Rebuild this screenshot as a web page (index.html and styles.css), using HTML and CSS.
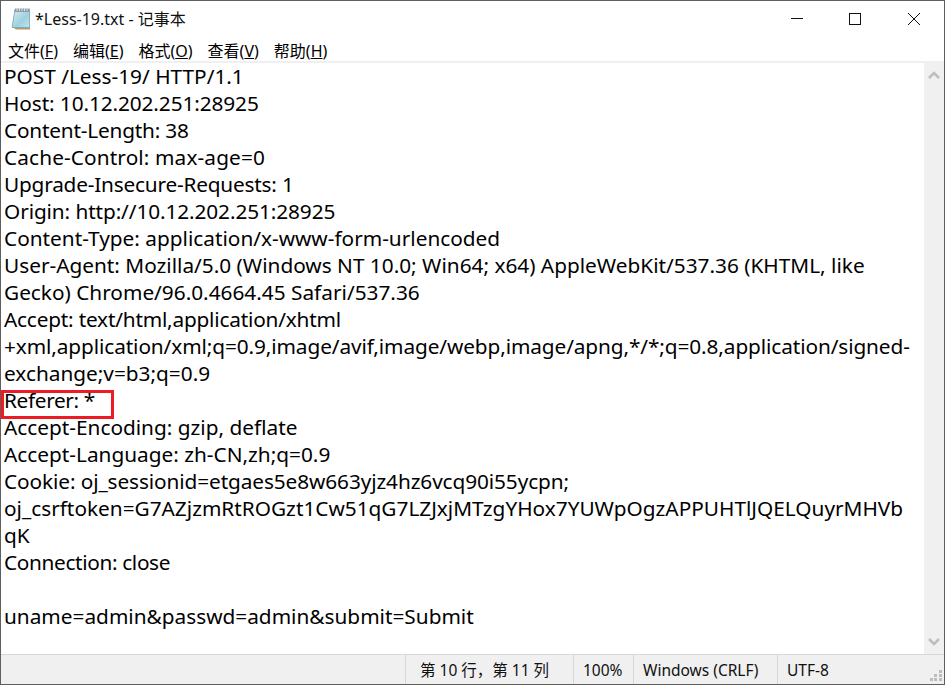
FILE: index.html
```html
<!DOCTYPE html>
<html lang="zh-CN">
<head>
<meta charset="utf-8">
<title>Less-19.txt - 记事本</title>
<link rel="stylesheet" href="styles.css">
</head>
<body>
<div class="window">
  <header class="titlebar">
    <svg class="app-icon" width="22" height="24" viewBox="0 0 22 24">
      <defs>
        <linearGradient id="pad" x1="0" y1="0" x2="1" y2="1">
          <stop offset="0" stop-color="#d6edf4"/>
          <stop offset="0.6" stop-color="#9fd0df"/>
          <stop offset="1" stop-color="#c5e4ec"/>
        </linearGradient>
      </defs>
      <path d="M3 20.500 L6 22.500 L20 22.500 L20 19 Z" fill="#b99a66"/>
      <path d="M5 2.500 L19.500 2.500 L19.500 20.500 L2 20.500 Z" fill="url(#pad)" stroke="#6fa6ba" stroke-width="0.8"/>
      <path d="M5 1.500 L19.500 1.500 L19.500 5 L4.500 5 Z" fill="#8d9aa3"/>
      <path d="M7 1 V4 M9.500 1 V4 M12 1 V4 M14.500 1 V4 M17 1 V4" stroke="#e6e6e6" stroke-width="1"/>
    </svg>
    <span class="title">*Less-19.txt - 记事本</span>
    <div class="controls">
      <svg class="ctl" width="58" height="38" viewBox="0 0 58 38"><path d="M23 17.500 H35" stroke="#111" stroke-width="1"/></svg>
      <svg class="ctl" width="59" height="38" viewBox="0 0 59 38"><rect x="23.500" y="12.500" width="11" height="11" fill="none" stroke="#111" stroke-width="1"/></svg>
      <svg class="ctl" width="58" height="38" viewBox="0 0 58 38"><path d="M23 12 L35 24 M35 12 L23 24" stroke="#111" stroke-width="1"/></svg>
    </div>
  </header>
  <nav class="menubar">
    <span class="menu-item">文件(<u>F</u>)</span>
    <span class="menu-item">编辑(<u>E</u>)</span>
    <span class="menu-item">格式(<u>O</u>)</span>
    <span class="menu-item">查看(<u>V</u>)</span>
    <span class="menu-item">帮助(<u>H</u>)</span>
  </nav>
  <main class="body">
    <div class="editor">
      <div class="line">POST /Less-19/ HTTP/1.1</div>
      <div class="line tight1">Host: 10.12.202.251:28925</div>
      <div class="line tight2">Content-Length: 38</div>
      <div class="line loose">Cache-Control: max-age=0</div>
      <div class="line tight2">Upgrade-Insecure-Requests: 1</div>
      <div class="line tight1">Origin: http://10.12.202.251:28925</div>
      <div class="line">Content-Type: application/x-www-form-urlencoded</div>
      <div class="line">User-Agent: Mozilla/5.0 (Windows NT 10.0; Win64; x64) AppleWebKit/537.36 (KHTML, like</div>
      <div class="line">Gecko) Chrome/96.0.4664.45 Safari/537.36</div>
      <div class="line tight2">Accept: text/html,application/xhtml</div>
      <div class="line tight1">+xml,application/xml;q=0.9,image/avif,image/webp,image/apng,*/*;q=0.8,application/signed-</div>
      <div class="line">exchange;v=b3;q=0.9</div>
      <div class="line tight3">Referer: *<span class="redbox"></span></div>
      <div class="line">Accept-Encoding: gzip, deflate</div>
      <div class="line">Accept-Language: zh-CN,zh;q=0.9</div>
      <div class="line tight1">Cookie: oj_sessionid=etgaes5e8w663yjz4hz6vcq90i55ycpn;</div>
      <div class="line">oj_csrftoken=G7AZjzmRtROGzt1Cw51qG7LZJxjMTzgYHox7YUWpOgzAPPUHTlJQELQuyrMHVb</div>
      <div class="line">qK</div>
      <div class="line tight3">Connection: close</div>
      <div class="line">&nbsp;</div>
      <div class="line">uname=admin&amp;passwd=admin&amp;submit=Submit</div>
    </div>
    <aside class="scrollbar">
      <svg width="20" height="20" viewBox="0 0 20 20"><path d="M5 14 L10 9 L15 14" fill="none" stroke="#bdbdbd" stroke-width="2.500"/></svg>
      <svg width="20" height="20" viewBox="0 0 20 20"><path d="M5 6 L10 11 L15 6" fill="none" stroke="#bdbdbd" stroke-width="2.500"/></svg>
    </aside>
  </main>
  <footer class="statusbar">
    <div class="cell cell-pos">第 10 行，第 11 列</div>
    <div class="cell cell-zoom">100%</div>
    <div class="cell cell-eol">Windows (CRLF)</div>
    <div class="cell cell-enc">UTF-8</div>
    <svg class="grip" width="14" height="14" viewBox="0 0 14 14">
      <path d="M10 1h3v3h-3z M5 5h3v3h-3z M10 5h3v3h-3z M1 9h3v3h-3z M5 9h3v3h-3z M10 9h3v3h-3z" fill="#bdbdbd"/>
    </svg>
  </footer>
</div>
</body>
</html>
```
FILE: styles.css
```css
* { box-sizing: border-box; }
html, body { margin: 0; padding: 0; background: #fff; }
body { width: 945px; height: 685px; overflow: hidden; }
.window {
  width: 945px;
  height: 685px;
  display: flex;
  flex-direction: column;
  background: #fff;
  border: 1px solid #5f5f5f;
  font-family: "Noto Sans", "Noto Sans CJK SC", sans-serif;
  color: #000;
}
.titlebar {
  height: 39px;
  flex: none;
  display: flex;
  align-items: center;
  padding: 0 0 3px 9px;
}
.title {
  margin: 0 0 2px 3px;
  font-size: 16px;
  color: #111;
}
.controls { margin-left: auto; display: flex; padding-right: 1px; align-self: flex-start; }
.ctl { display: block; }
.menubar {
  height: 21px;
  flex: none;
  display: flex;
  gap: 15px;
  padding: 1px 0 0 7px;
  align-items: center;
  font-size: 16px;
  line-height: 20px;
}
.menu-item { white-space: nowrap; }
.body {
  flex: 1;
  min-height: 0;
  display: flex;
  border-top: 2px solid #f0f0f0;
}
.editor {
  flex: 1;
  min-width: 0;
  padding: 0 0 0 3px;
  font-size: 20.800px;
  line-height: 27px;
}
.line { height: 27px; white-space: nowrap; position: relative; }
.tight1 { letter-spacing: -0.1px; }
.tight2 { letter-spacing: -0.2px; }
.tight3 { letter-spacing: -0.35px; }
.loose { letter-spacing: 0.12px; }
.redbox {
  position: absolute;
  left: -3px;
  top: 3px;
  width: 113px;
  height: 29px;
  border: 3px solid #ed1c24;
}
.scrollbar {
  width: 20px;
  flex: none;
  background: #f0f0f0;
  display: flex;
  flex-direction: column;
  justify-content: space-between;
  padding: 1px 0;
}
.scrollbar svg { display: block; }
.statusbar {
  height: 30px;
  flex: none;
  display: flex;
  align-items: stretch;
  background: #f0f0f0;
  border-top: 1px solid #d7d7d7;
  font-size: 15.500px;
  color: #111;
  padding-left: 404px;
  position: relative;
}
.cell {
  border-left: 1px solid #d7d7d7;
  display: flex;
  align-items: center;
  padding-left: 14px;
  white-space: nowrap;
}
.cell-pos { width: 168px; }
.cell-zoom { width: 60px; padding-left: 9px; }
.cell-eol { width: 144px; padding-left: 9px; }
.cell-enc { padding-left: 9px; }
.grip { position: absolute; right: 1px; bottom: 1px; }
```
